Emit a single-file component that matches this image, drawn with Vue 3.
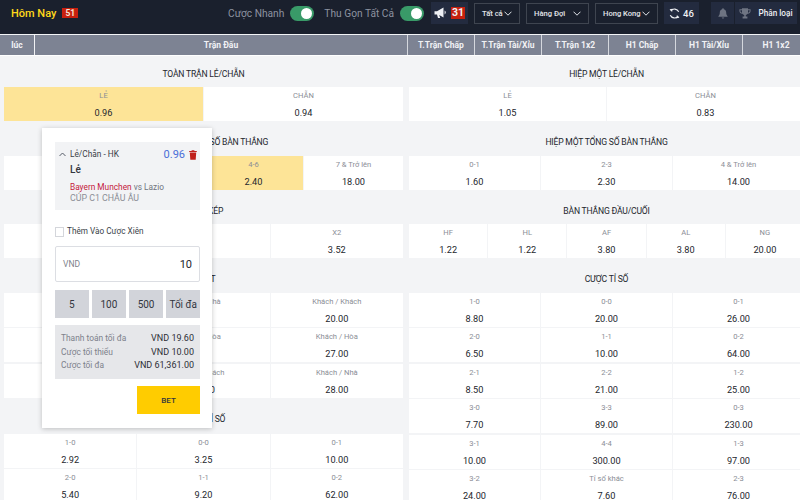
<template>
  <div class="page">
    <!-- TOP BAR -->
    <header class="topbar">
      <span class="today">Hôm Nay</span>
      <span class="today-count">51</span>

      <div class="topbar-right">
        <span class="toggle-label">Cược Nhanh</span>
        <span class="toggle"><i /></span>
        <span class="toggle-label second">Thu Gọn Tất Cả</span>
        <span class="toggle"><i /></span>

        <div class="dark-btn promo">
          <svg width="14" height="12" viewBox="0 0 14 12">
            <path d="M0.5 4.2 H3 L9.5 0.6 V10.4 L5.2 8 L6.2 11 H4 L3 7.4 H0.5 Z M10.6 3.6 C12.2 4.2 12.2 6.8 10.6 7.4 Z" fill="#eef0f4" />
          </svg>
          <span class="promo-count">31</span>
        </div>

        <div class="select" v-for="s in selects" :key="s.label" :style="{ width: s.width + 'px' }">
          <span>{{ s.label }}</span>
          <svg width="8" height="5" viewBox="0 0 8 5"><path d="M0.5 0.7 L4 4.2 L7.5 0.7" fill="none" stroke="#dfe2e8" stroke-width="1" /></svg>
        </div>

        <div class="dark-btn refresh">
          <svg width="11" height="11" viewBox="0 0 12 12">
            <path d="M2 3.2 A5 5 0 0 1 10.6 4 M10 8.8 A5 5 0 0 1 1.4 8" fill="none" stroke="#eef0f4" stroke-width="1.3" />
            <path d="M0.6 1.4 L3.8 0.9 L3.4 4.4 Z M11.4 10.6 L8.2 11.1 L8.6 7.6 Z" fill="#eef0f4" />
          </svg>
          <span>46</span>
        </div>

        <div class="dark-btn bell">
          <svg width="10" height="11" viewBox="0 0 10 11">
            <path d="M5 0.3 C5.6 0.3 5.9 0.7 5.9 1.2 C7.5 1.6 8.2 3 8.2 4.6 C8.2 6.6 8.8 7.4 9.6 8.2 V8.8 H0.4 V8.2 C1.2 7.4 1.8 6.6 1.8 4.6 C1.8 3 2.5 1.6 4.1 1.2 C4.1 0.7 4.4 0.3 5 0.3 Z M3.8 9.4 H6.2 C6.2 10.8 3.8 10.8 3.8 9.4 Z" fill="#6e7482" />
          </svg>
        </div>
        <div class="dark-btn rank">
          <svg width="12" height="11" viewBox="0 0 12 11">
            <path d="M3 0.3 H9 V1.3 H11.6 V3 C11.6 4.6 10.4 5.6 8.7 5.8 C8.2 6.5 7.6 6.9 6.8 7 V8.6 H8.4 V10.6 H3.6 V8.6 H5.2 V7 C4.4 6.9 3.8 6.5 3.3 5.8 C1.6 5.6 0.4 4.6 0.4 3 V1.3 H3 Z M1.4 2.2 V3 C1.4 3.9 2 4.5 3 4.7 V2.2 Z M10.6 2.2 H9 V4.7 C10 4.5 10.6 3.9 10.6 3 Z" fill="#6e7482" fill-rule="evenodd" />
          </svg>
          <span>Phân loại</span>
        </div>
      </div>
    </header>

    <!-- TABLE HEADER -->
    <div class="table-head">
      <div class="head-time">lúc</div>
      <div class="head-match">Trận Đấu</div>
      <div class="head-col" v-for="h in headCols" :key="h">{{ h }}</div>
    </div>

    <!-- MARKETS -->
    <div class="markets">
      <div class="market-col left">
        <section v-for="m in leftMarkets" :key="m.title">
          <h3>{{ m.title }}</h3>
          <div class="rows">
            <div class="row" v-for="(row, r) in m.rows" :key="r">
              <div class="cell" v-for="(c, i) in row" :key="i" :class="{ picked: c[2] }">
                <span class="cell-label">{{ c[0] }}</span>
                <span class="cell-odds">{{ c[1] }}</span>
              </div>
            </div>
          </div>
        </section>
      </div>
      <div class="market-col right">
        <section v-for="m in rightMarkets" :key="m.title">
          <h3>{{ m.title }}</h3>
          <div class="rows">
            <div class="row" v-for="(row, r) in m.rows" :key="r">
              <div class="cell" v-for="(c, i) in row" :key="i">
                <span class="cell-label">{{ c[0] }}</span>
                <span class="cell-odds">{{ c[1] }}</span>
              </div>
            </div>
          </div>
        </section>
      </div>
    </div>

    <!-- BET SLIP -->
    <aside class="slip">
      <div class="slip-info">
        <div class="slip-top">
          <svg class="slip-chevron" width="7" height="5" viewBox="0 0 7 5"><path d="M0.5 4 L3.5 1 L6.5 4" fill="none" stroke="#555b66" stroke-width="1" /></svg>
          <span class="slip-market">Lẻ/Chẵn - HK</span>
          <span class="slip-odds">0.96</span>
          <svg class="slip-trash" width="8" height="10" viewBox="0 0 8 10">
            <path d="M2.8 0.2 H5.2 L5.6 1 H7.8 V2 H0.2 V1 H2.4 Z M0.8 2.6 H7.2 L6.7 9.8 H1.3 Z" fill="#c0211c" />
          </svg>
        </div>
        <div class="slip-pick">Lẻ</div>
        <div class="slip-teams"><b>Bayern Munchen</b> vs Lazio</div>
        <div class="slip-league">CÚP C1 CHÂU ÂU</div>
      </div>

      <label class="slip-check"><i />Thêm Vào Cược Xiên</label>

      <div class="slip-input">
        <span>VND</span>
        <strong>10</strong>
      </div>

      <div class="slip-stakes">
        <button v-for="s in stakes" :key="s">{{ s }}</button>
      </div>

      <div class="slip-limits">
        <div v-for="l in limits" :key="l[0]">
          <span>{{ l[0] }}</span><em>{{ l[1] }}</em>
        </div>
      </div>

      <div class="slip-actions">
        <button class="bet">BET</button>
      </div>
    </aside>
  </div>
</template>

<script setup>
const selects = [
  { label: "Tất cả", width: 46 },
  { label: "Hàng Đợi", width: 63 },
  { label: "Hong Kong", width: 63 },
];

const headCols = ["T.Trận Chấp", "T.Trận Tài/Xỉu", "T.Trận 1x2", "H1 Chấp", "H1 Tài/Xỉu", "H1 1x2"];

const stakes = ["5", "100", "500", "Tối đa"];

const limits = [
  ["Thanh toán tối đa", "VND 19.60"],
  ["Cược tối thiểu", "VND 10.00"],
  ["Cược tối đa", "VND 61,361.00"],
];

// cells under the slip stay empty, only the labels that stick out are filled
const leftMarkets = [
  {
    title: "TOÀN TRẬN LẺ/CHẴN",
    rows: [[["LẺ", "0.96", true], ["CHẴN", "0.94"]]],
  },
  {
    title: "TOÀN TRẬN TỔNG SỐ BÀN THẮNG",
    rows: [[["", ""], ["", ""], ["4-6", "2.40", true], ["7 & Trở lên", "18.00"]]],
  },
  {
    title: "CƯỢC KÉP",
    rows: [[["", ""], ["", ""], ["X2", "3.52"]]],
  },
  {
    title: "HT/FT",
    rows: [
      [["", ""], ["Hòa / Nhà", ""], ["Khách / Khách", "20.00"]],
      [["", ""], ["Hòa / Hòa", ""], ["Khách / Hòa", "27.00"]],
      [["", ""], ["Hòa / Khách", "20.00"], ["Khách / Nhà", "28.00"]],
    ],
  },
  {
    title: "CƯỢC TỈ SỐ",
    rows: [
      [["1-0", "2.92"], ["0-0", "3.25"], ["0-1", "10.00"]],
      [["2-0", "5.40"], ["1-1", "9.20"], ["0-2", "62.00"]],
    ],
  },
];

const rightMarkets = [
  {
    title: "HIỆP MỘT LẺ/CHẴN",
    rows: [[["LẺ", "1.05"], ["CHẴN", "0.83"]]],
  },
  {
    title: "HIỆP MỘT TỔNG SỐ BÀN THẮNG",
    rows: [[["0-1", "1.60"], ["2-3", "2.30"], ["4 & Trở lên", "14.00"]]],
  },
  {
    title: "BÀN THẮNG ĐẦU/CUỐI",
    rows: [[["HF", "1.22"], ["HL", "1.22"], ["AF", "3.80"], ["AL", "3.80"], ["NG", "20.00"]]],
  },
  {
    title: "CƯỢC TỈ SỐ",
    rows: [
      [["1-0", "8.80"], ["0-0", "20.00"], ["0-1", "26.00"]],
      [["2-0", "6.50"], ["1-1", "10.00"], ["0-2", "64.00"]],
      [["2-1", "8.50"], ["2-2", "21.00"], ["1-2", "25.00"]],
      [["3-0", "7.70"], ["3-3", "89.00"], ["0-3", "230.00"]],
      [["3-1", "10.00"], ["4-4", "300.00"], ["1-3", "97.00"]],
      [["3-2", "24.00"], ["Tỉ số khác", "7.60"], ["2-3", "76.00"]],
    ],
  },
];
</script>

<style scoped>
.page {
  position: relative;
  width: 800px;
  height: 500px;
  overflow: hidden;
  background: #f3f4f6;
  font-family: Roboto, "Noto Sans", sans-serif;
  color: #23262d;
}

/* TOP BAR */
.topbar {
  display: flex;
  align-items: center;
  height: 34px;
  padding: 2px 3px 10px 11px;
  box-sizing: border-box;
  background: #1a202d;
}

.today {
  font-size: 11px;
  font-weight: 500;
  color: #ffd91a;
}

.today-count {
  margin-left: 6px;
  padding: 0 3px;
  background: #c7200f;
  color: #f6e7d8;
  font-size: 8.5px;
  font-weight: 700;
  line-height: 10px;
}

.topbar-right {
  display: flex;
  align-items: center;
  margin-left: auto;
}

.toggle-label {
  font-size: 10.2px;
  color: #8d93a0;
  white-space: nowrap;
}

.toggle-label.second {
  margin-left: 10px;
}

.toggle {
  display: flex;
  align-items: center;
  justify-content: flex-end;
  width: 24px;
  height: 15px;
  margin-left: 6px;
  padding-right: 2px;
  box-sizing: border-box;
  border-radius: 8px;
  background: #399a68;
}

.toggle i {
  width: 11px;
  height: 11px;
  border-radius: 50%;
  background: #fff;
}

.dark-btn {
  display: flex;
  align-items: center;
  justify-content: center;
  height: 22px;
  background: #232b3f;
  color: #eef0f4;
  font-size: 8.2px;
  font-weight: 500;
  white-space: nowrap;
}

.promo {
  gap: 3px;
  width: 37px;
  margin-left: 7px;
}

.promo-count {
  padding: 0 1px;
  background: #c7200f;
  font-size: 10.5px;
  font-weight: 700;
  line-height: 12px;
}

.select {
  display: flex;
  align-items: center;
  justify-content: space-between;
  height: 21px;
  margin-left: 6px;
  padding: 0 7px;
  box-sizing: border-box;
  border: 1px solid #3f4550;
  color: #e3e5ea;
  font-size: 7.6px;
  font-weight: 500;
  white-space: nowrap;
}

.select svg {
  flex-shrink: 0;
}

.refresh {
  gap: 3px;
  width: 35px;
  margin-left: 6px;
  font-size: 9.5px;
}

.bell {
  width: 23px;
  margin-left: 12px;
}

.rank {
  gap: 7px;
  width: 62px;
  margin-left: 1px;
}

/* TABLE HEADER */
.table-head {
  display: flex;
  height: 20px;
  margin-top: 1px;
  border-bottom: 1px solid #fff;
  background: #7d8393;
  color: #f1f2f5;
  font-size: 8.5px;
  font-weight: 700;
  line-height: 20px;
  text-align: center;
  white-space: nowrap;
}

.head-time {
  flex: 0 0 34px;
  border-right: 1px solid #f1f2f5;
}

.head-match {
  flex: 0 0 372px;
}

.head-col {
  flex: 0 0 67px;
  box-sizing: border-box;
  border-left: 1px solid #d5d8de;
}

/* MARKETS */
.markets {
  display: grid;
  grid-template-columns: 399px 395px;
  column-gap: 6px;
  padding-left: 4px;
}

h3 {
  margin: 0;
  height: 31px;
  font-size: 8.6px;
  font-weight: 400;
  letter-spacing: -0.2px;
  line-height: 37px;
  text-align: center;
  color: #23262d;
}

section + section h3 {
  height: 34.5px;
  line-height: 42px;
}

/* this block starts a little lower than the others */
.left section:last-child h3 {
  height: 36px;
}

.rows {
  display: flex;
  flex-direction: column;
  gap: 1.6px;
}

.row {
  display: flex;
  gap: 1px;
}

.cell {
  flex: 1 1 0;
  min-width: 0;
  height: 34px;
  display: flex;
  flex-direction: column;
  align-items: center;
  background: #fff;
}

.cell.picked {
  background: #fde497;
}

.cell-label {
  height: 11px;
  margin-top: 3px;
  font-size: 7.6px;
  line-height: 11px;
  color: #8b8e96;
}

.cell-odds {
  margin-top: 5px;
  font-size: 9.2px;
  line-height: 13px;
  color: #23262d;
}

/* BET SLIP */
.slip {
  position: absolute;
  left: 42px;
  top: 128px;
  width: 170px;
  height: 300px;
  padding: 14px 12px 0 13px;
  box-sizing: border-box;
  background: #fff;
  box-shadow: 0 1px 5px rgba(0, 0, 0, 0.22);
}

.slip-info {
  height: 68px;
  padding: 5px 3px 0 4px;
  box-sizing: border-box;
  background: #f2f3f5;
  font-size: 8.3px;
  line-height: 11px;
}

.slip-top {
  display: flex;
  align-items: center;
  height: 15px;
}

.slip-chevron {
  margin-right: 4px;
}

.slip-market {
  flex: 1;
  color: #3b3f49;
}

.slip-odds {
  margin-right: 4px;
  font-size: 11px;
  color: #4a6fd8;
}

.slip-pick {
  margin: 2px 0 7px 11px;
  font-size: 10px;
  font-weight: 500;
  color: #33363e;
}

.slip-teams {
  margin-left: 11px;
  color: #70747e;
}

.slip-teams b {
  font-weight: 400;
  color: #c4183c;
}

.slip-league {
  margin-left: 11px;
  font-size: 8.8px;
  color: #8b8e96;
}

.slip-check {
  display: flex;
  align-items: center;
  gap: 3px;
  margin-top: 16px;
  font-size: 8.2px;
  line-height: 11px;
  color: #3b3f49;
}

.slip-check i {
  box-sizing: border-box;
  width: 9px;
  height: 10px;
  border: 1px solid #d4d6db;
  background: #fff;
}

.slip-input {
  display: flex;
  justify-content: space-between;
  align-items: center;
  height: 36px;
  margin-top: 9px;
  padding: 0 7px;
  box-sizing: border-box;
  border: 1px solid #dcdee3;
  border-radius: 2px;
  font-size: 8.5px;
  color: #7d818b;
}

.slip-input strong {
  font-size: 11px;
  font-weight: 400;
  color: #23262d;
}

.slip-stakes {
  display: grid;
  grid-template-columns: repeat(4, 1fr);
  gap: 3.5px;
  margin-top: 8px;
}

.slip-stakes button {
  height: 28px;
  padding: 0;
  border: 0;
  background: #d2d4da;
  font-family: inherit;
  font-size: 10px;
  color: #33363e;
}

.slip-limits {
  height: 54px;
  margin-top: 7px;
  padding: 7px 6px 0;
  box-sizing: border-box;
  background: #e6e7ea;
  font-size: 8.4px;
  line-height: 13.5px;
}

.slip-limits div {
  display: flex;
  justify-content: space-between;
  color: #7d818b;
}

.slip-limits em {
  font-style: normal;
  font-size: 9px;
  color: #2c2f36;
}

.slip-actions {
  display: flex;
  justify-content: flex-end;
  margin-top: 7px;
}

.bet {
  width: 63px;
  height: 28px;
  border: 0;
  background: #ffcc00;
  font-family: inherit;
  font-size: 8px;
  font-weight: 500;
  color: #33363e;
}
</style>
